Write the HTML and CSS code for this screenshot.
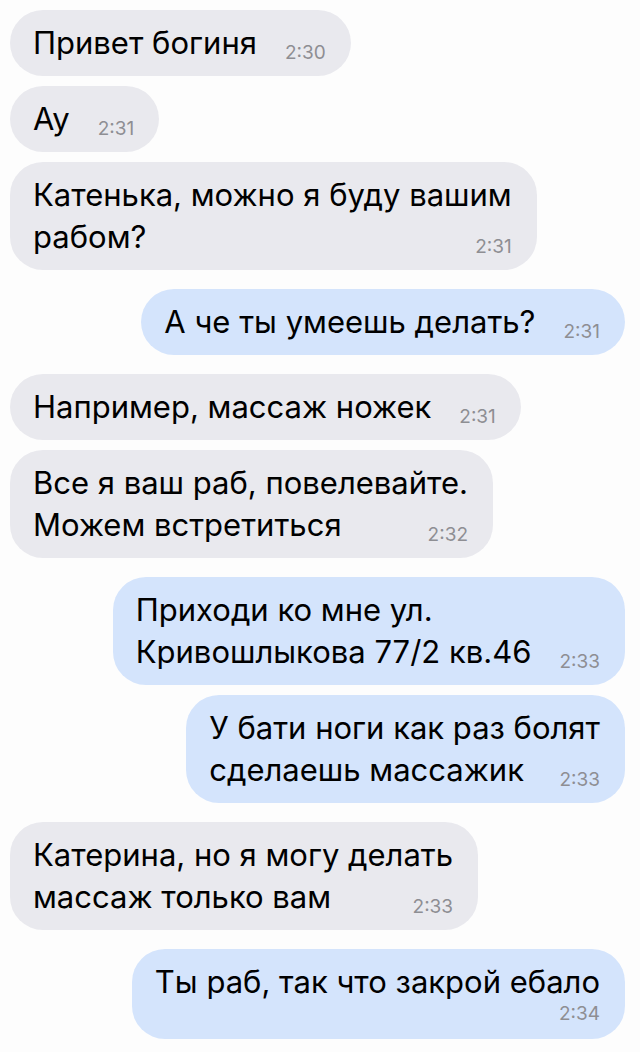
FILE: index.html
```html
<!DOCTYPE html>
<html lang="ru">
<head>
  <meta charset="UTF-8">
  <meta name="viewport" content="width=device-width, initial-scale=1.0">
  <title>Чат</title>
  <link rel="stylesheet" href="styles.css">
</head>
<body>

  <div class="chat">

    <!-- incoming -->
    <div class="group">
      <div class="msg in">Привет богиня<span class="time">2:30</span></div>
      <div class="msg in">Ау<span class="time">2:31</span></div>
      <div class="msg in">Катенька, можно я буду вашим<br>рабом?<span class="time">2:31</span></div>
    </div>

    <!-- outgoing -->
    <div class="group">
      <div class="msg out">А че ты умеешь делать?<span class="time">2:31</span></div>
    </div>

    <div class="group">
      <div class="msg in">Например, массаж ножек<span class="time">2:31</span></div>
      <div class="msg in">Все я ваш раб, повелевайте.<br>Можем встретиться<span class="time">2:32</span></div>
    </div>

    <div class="group">
      <div class="msg out">Приходи ко мне ул.<br>Кривошлыкова 77/2 кв.46<span class="time">2:33</span></div>
      <div class="msg out">У бати ноги как раз болят<br>сделаешь массажик<span class="time">2:33</span></div>
    </div>

    <div class="group">
      <div class="msg in">Катерина, но я могу делать<br>массаж только вам<span class="time">2:33</span></div>
    </div>

    <div class="group">
      <div class="msg out">Ты раб, так что закрой ебало<span class="time below">2:34</span></div>
    </div>

  </div>

</body>
</html>
```

FILE: styles.css
```css
body {
  margin: 0;
  padding: 0;
  background: #fdfdfd;
  font-family: "Inter", "Roboto", sans-serif;
  color: #000;
}
.chat {
  display: flex;
  flex-direction: column;
  gap: 19px;
  padding: 10px 15px 10px 10px;
}
.group {
  display: flex;
  flex-direction: column;
  gap: 10px;
}
.msg {
  max-width: 600px;
  padding: 12px 25px 12px 23px;
  border-radius: 33px;
  font-size: 31px;
  line-height: 42px;
}
.msg.in {
  align-self: flex-start;
  background-color: #e9e9ee;
}
.msg.out {
  align-self: flex-end;
  background-color: #d4e4fc;
}
.time {
  float: right;
  margin: 21px 0 0 28px;
  font-size: 19px;
  line-height: 20px;
  color: #8e8e93;
}
.time.below {
  float: none;
  display: block;
  margin: -3px 0 0;
  text-align: right;
  line-height: 27px;
}
```
